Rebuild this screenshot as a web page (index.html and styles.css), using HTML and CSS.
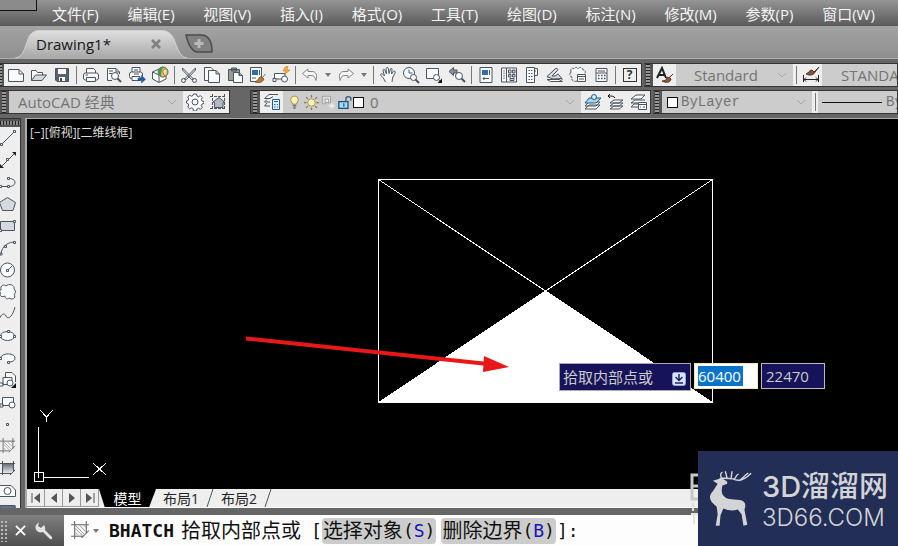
FILE: index.html
```html
<!DOCTYPE html>
<html lang="zh-CN">
<head>
<meta charset="utf-8">
<title>Drawing1</title>
<link rel="stylesheet" href="styles.css">
</head>
<body>
<svg class="defs" aria-hidden="true">
  <defs>
    <linearGradient id="tabfill" x1="0" y1="0" x2="0" y2="1"><stop offset="0" stop-color="#e0e0e0"/><stop offset="1" stop-color="#a8a8a8"/></linearGradient>
    <linearGradient id="shade" x1="0" y1="0" x2="0" y2="1"><stop offset="0" stop-color="#60656d"/><stop offset="1" stop-color="#f4f5f7"/></linearGradient>
    <symbol id="new" viewBox="0 0 18 18"><path class="w" d="M1.500 3.500H12L16.500 8V15.500H1.500Z"/><path d="M12 3.500V8H16.500"/></symbol>
    <symbol id="open" viewBox="0 0 18 18"><path class="w" d="M1.500 14.500V4.500H6L7.500 6.500H12.500V9"/><path class="g" d="M1.500 14.500L5.500 9H16.500L12 14.500Z"/></symbol>
    <symbol id="save" viewBox="0 0 18 18"><path class="d" d="M2.500 2.500H15.500V15.500H4L2.500 14Z"/><path fill="#fff" stroke="none" d="M5 3H13V8H5ZM6 11H12V15H6Z"/><path fill="#3f4855" stroke="none" d="M7 12h2v3H7z"/></symbol>
    <symbol id="print" viewBox="0 0 18 18"><path class="w" d="M4.500 7V2.500H11.500L13.500 4.500V7"/><rect class="w" x="1.500" y="7" width="15" height="7" rx="2"/><path class="w" d="M4.500 11.500H13.500V15.500H4.500ZM3.500 9H6"/></symbol>
    <symbol id="preview" viewBox="0 0 18 18"><path class="w" d="M2.500 14.500V2.500H11L14.500 6V8M2.500 14.500H7"/><path d="M4 5h4M4 7.500h3M11 2.500V6h3.500"/><circle class="w" cx="10" cy="10" r="3.500"/><path stroke-width="2" d="M12.500 12.500L16 16"/></symbol>
    <symbol id="publish" viewBox="0 0 18 18"><path class="w" d="M4 6V1.500H12V6"/><rect class="w" x="1.500" y="6" width="13" height="6.500" rx="2"/><path class="w" d="M4 10.500h8v4H4zM6 4h4M6 8h5"/><path fill="#1f5da5" stroke="#1f4d85" stroke-width=".5" d="M10 12h3.500V9.500l4 3.800-4 3.700v-2.500H10z"/></symbol>
    <symbol id="cube" viewBox="0 0 18 18"><path class="w" d="M1.500 6L8 3L15 6V13L8 16.500L1.500 13Z"/><path d="M1.500 6L8 9V16"/><circle cx="12" cy="6" r="5" fill="#f0c565" stroke="#5a6b3d"/><path fill="#3a9b57" stroke="none" d="M11 1c-5 2-5 7-1 10 1-3-1-6 3-10z"/><path fill="#dff0da" stroke="#c85729" d="M15 3c-5 0-3 5-1 7"/></symbol>
    <symbol id="cut" viewBox="0 0 18 18"><path d="M2.500 2L13.500 13L11.500 13.500L2.500 4ZM15.500 2L4.500 13L6.500 13.500L15.500 4Z"/><circle cx="3.500" cy="14.500" r="2"/><circle cx="14.500" cy="14.500" r="2"/></symbol>
    <symbol id="copy" viewBox="0 0 18 18"><path class="w" d="M1.500 1.500H8L10.500 4V14.500H1.500Z"/><path class="w" d="M5.500 4.500H13L16.500 8V16.500H5.500ZM13 4.500V8H16.500"/></symbol>
    <symbol id="paste" viewBox="0 0 18 18"><path fill="#9a9a94" d="M2.500 3.500H13.500V14.500H2.500ZM5.500 2h5v3h-5z"/><path class="w" d="M7.500 6.500H13L16.500 9.500V16.500H7.500ZM13 6.500V9.500H16.500"/></symbol>
    <symbol id="match" viewBox="0 0 18 18"><path class="w" d="M1.500 1.500H12.500V15.500H1.500Z"/><path fill="#2d6ca8" stroke="none" d="M3 4h6v5H3z"/><path d="M10.500 4v5M3 12h4"/><path fill="#b57a3d" stroke="#744620" stroke-width=".8" d="M16.500 8L13 12M12 10.500l3 2.500c-2 4-5 4-9 3c3-1 3-4 6-5.500z"/></symbol>
    <symbol id="block" viewBox="0 0 18 18"><path class="w" d="M2.500 7.500H13V13H2.500Z"/><path class="w" d="M1 12.500h3v3H1zM9.500 13a3 3 0 106 0a3 3 0 10-6 0"/><path fill="#f5ad32" stroke="#bd6c16" stroke-width=".5" d="M13 1l3-1-1 4h3l-6 5 1.500-4H11z"/></symbol>
    <symbol id="undo" viewBox="0 0 18 18"><path fill="#f7f7f7" stroke="#858585" d="M1.500 7.500L7 3V5.500H11C15 5.500 16.500 9 15 14.500C14 11 13 9.500 10 9.500H7V12Z"/></symbol>
    <symbol id="redo" viewBox="0 0 18 18"><path fill="#f7f7f7" stroke="#858585" d="M16.500 7.500L11 3V5.500H7C3 5.500 1.500 9 3 14.500C4 11 5 9.500 8 9.500H11V12Z"/></symbol>
    <symbol id="down" viewBox="0 0 8 8"><path fill="#777" stroke="none" d="M1 2h6L4 6z"/></symbol>
    <symbol id="pan" viewBox="0 0 18 18"><path class="w" d="M6.500 16C5 12 2 10 1.500 8.500C2 7 4 8 5.500 10L4 4.500C4 3 5.500 3 6 4.500L7.500 8L7 2.500C7.500 1 9 1 9.500 3L10 7.500L11.500 3C12 2 13.500 2.500 13 4L12.500 8L14.500 5.500C15.500 4.500 17 5.500 16 7L13.500 12L13 16"/></symbol>
    <symbol id="zoomrt" viewBox="0 0 18 18"><circle class="w" cx="7" cy="7" r="5.500"/><path stroke="#27659a" d="M7 3.500V7h3.500"/><circle class="w" cx="11.500" cy="11.500" r="3"/><path stroke-width="2" d="M13.500 13.500L17 17"/></symbol>
    <symbol id="zoomwin" viewBox="0 0 18 18"><path class="w" d="M1.500 2.500h12v10h-12z"/><circle class="w" cx="11.500" cy="11.500" r="3"/><path d="M13.500 13.500L15 15"/><path fill="#111" stroke="none" d="M17 12.500V17H12.500z"/></symbol>
    <symbol id="zoomprev" viewBox="0 0 18 18"><path fill="#8a8f95" d="M1 5.500L5.500 1.500V4H9V7H5.500V9.500Z"/><circle class="w" cx="11" cy="10" r="3.500"/><path stroke-width="2" d="M13.500 12.500L17 16"/></symbol>
    <symbol id="props" viewBox="0 0 18 18"><path class="w" d="M3 1.500H15V16.500H3Z"/><path fill="#2d6fa9" stroke="none" d="M5 4h6v5H5z"/><path d="M12.500 4v5M6 12.500h6M7.500 11L6 12.500L7.500 14"/></symbol>
    <symbol id="center" viewBox="0 0 18 18"><path class="w" d="M1.500 2H16.500V16H1.500ZM6.500 2V16"/><path stroke-dasharray="1.500 1" d="M4 4v10"/><path class="g" d="M8.500 4h2.500v3H8.500zM12.500 4h2.500v3h-2.500zM8.500 8.500h2.500v2.500H8.500zM12.500 8.500h2.500v2.500h-2.500zM10 12.500h4v2h-4z"/></symbol>
    <symbol id="palette" viewBox="0 0 18 18"><path class="w" d="M3.500 1.500h8v15h-8zM11.500 2.500h3v7h-3z"/><path stroke-dasharray="1.500 1" d="M5.500 4.500h4M5.500 7.500h4M5.500 10.500h4M5.500 13.500h4M11.500 5h3"/></symbol>
    <symbol id="sheets" viewBox="0 0 18 18"><path class="w" d="M1 13.500H13L16.500 15.500H4.500ZM1 11H12L16.500 13.500"/><path class="g" d="M1 10.500L9 3C11 1.500 13 3 11 5L6 10H9L12 8L16 12.500L7 13Z"/></symbol>
    <symbol id="cloud" viewBox="0 0 18 18"><path class="w" stroke-dasharray="3 1" d="M2 6C1 3 3 1 5 3C6 1 8 1 9 3C11 0 14 2 14 4C17 4 17 7 15 8"/><path stroke-dasharray="3 1" d="M2 6C0 8 1 11 3 11C2 15 5 16 8 15"/><path class="w" d="M8.500 8.500h8v7h-8zM8.500 10.500h8M10 13h5"/></symbol>
    <symbol id="calc" viewBox="0 0 18 18"><path class="w" d="M4 2.500h11v13H4zM6 5h7M4 7h11"/><path stroke-width="1.500" stroke-dasharray="1.500 1.500" d="M6 9.500h8M6 12.500h8"/></symbol>
    <symbol id="gear" viewBox="0 0 18 18"><path class="w" d="M7.500 1h3l.5 2 1.500.7 2-1 1.800 1.800-1 2 .7 1.500 2 .5v2l-2 .5-.7 1.500 1 2-1.800 1.800-2-1-1.500.7-.5 2h-3L7 15.500l-1.500-.7-2 1L1.700 14l1-2-.7-1.500-1.500-.5V8L2 7.500 2.700 6l-1-2L3.500 2.200l2 1L7 2.500z"/><circle cx="9" cy="9" r="3"/></symbol>
    <symbol id="house" viewBox="0 0 18 18"><path stroke-dasharray="3 1" d="M1 3.500h16M1 15.500h16M3.500 1v16M15.500 1v16"/><path fill="#b4bac3" d="M4 9L10 4.500L15.500 9L14 9.500V14.500H5.500V9.500Z"/></symbol>
    <symbol id="layerprops" viewBox="0 0 18 18"><path class="w" d="M1.500 5.500L6 1.500H15M1.500 5.500H7L10 3.500M1.500 9L4 6.500M1.500 9H7M1.500 13L4 10M1.500 13H7"/><path fill="#e0f1fb" stroke="#225d8e" d="M9.500 6.500h7v10h-7zM11 8.500h4M11 11.500h1.500M14 11.500h1M11 14h1.500M14 14h1"/></symbol>
    <symbol id="bulb" viewBox="0 0 18 18"><path fill="#fff0a8" stroke="#927f43" d="M6.500 11C6.500 8.500 4.500 8 4.500 5.500C4.500 0 13.500 0 13.500 5.500C13.500 8 11.500 8.500 11.500 11Z"/><path fill="#777" d="M7 12.500h4M7 14.500h4M8 16h2"/></symbol>
    <symbol id="sun" viewBox="0 0 18 18"><path stroke="#837851" stroke-width="1.500" d="M9 0v3M9 15v3M0 9h3M15 9h3M2.500 2.500l2 2M13.500 13.500l2 2M15.500 2.500l-2 2M2.500 15.500l2-2"/><circle cx="9" cy="9" r="4.500" fill="#fff2b0" stroke="#998657"/></symbol>
    <symbol id="vpfreeze" viewBox="0 0 18 18"><path stroke="#999" fill="#ddd" d="M1.500 1.500h10v8h-3M1.500 1.500v9h5"/><path fill="#eee" stroke="#999" d="M5 5h4v4H5z"/><path stroke="#f3f3f3" d="M13 9v8M9 13h8M10.500 10.500l5 5M15.500 10.500l-5 5"/></symbol>
    <symbol id="lock" viewBox="0 0 18 18"><path fill="#a7ddf5" stroke="#164f7c" stroke-width="1.500" d="M1 8h11v8H1z"/><path stroke="#275b80" stroke-width="1.500" d="M9.500 8V4.500C9.500 1 15.500 1 15.500 4.500V7M7 10v4"/></symbol>
    <symbol id="layers" viewBox="0 0 18 18"><path class="w" d="M1 16L5 12H16L12 16ZM1 13L5 9H16L12 13Z"/><path fill="#a9d2e9" stroke="#245d84" d="M1 10L5 5H17L12 10Z"/><circle cx="10" cy="4" r="2.500" fill="#d5edf7" stroke="#245d84"/></symbol>
    <symbol id="layerprev" viewBox="0 0 18 18"><path class="w" d="M3 16L7 13H16L12 16ZM3 13L7 10H16L12 13ZM3 10L7 7H16L12 10Z"/><path stroke="#111" d="M8 5C7 3 5 3 1 3M3 1L1 3L3 5"/></symbol>
    <symbol id="layerstate" viewBox="0 0 18 18"><path class="w" d="M1 14L4 11H8M1 10L5 7H15M1 6L6 2H15L11 6ZM1 10H8M1 14H8"/><path class="w" d="M8.500 9.500h8v7h-8zM8.500 11.500h8M10 14h1M13 14h2"/></symbol>
    <symbol id="brushA" viewBox="0 0 18 18"><path stroke="#222" stroke-width="2" d="M1 12L6 2L10 12M3 9H9"/><path fill="#935833" stroke="#53301b" d="M17 8L13 12L11 11C11 14 9 15 6 15C10 17 14 17 15 13L13 11"/></symbol>
    <symbol id="brushDim" viewBox="0 0 18 18"><path stroke="#222" d="M1.500 9v7M16.500 9v7M2 13.500h14M4 11.500L2 13.500l2 2M14 11.500l2 2-2 2"/><path fill="#805536" stroke="#513320" d="M17 1L12 6L10 4C7 4 7 7 4 8C8 10 12 9 13 6Z"/></symbol>
    <symbol id="chev" viewBox="0 0 10 10"><path stroke="#a6a6a6" d="M1 3L5 7L9 3"/></symbol>
    <symbol id="hatch" viewBox="0 0 18 18"><path fill="#f7f7f7" stroke="none" d="M3 3h12v8l-4 4H3z"/><path stroke="#686868" d="M3.500 0v17M0 3.500h17M14.500 0v12M0 14.500h11M10 16l7-7"/><path stroke="#888" stroke-width=".8" d="M4 11l3 3M4 7l7 7M4 4l9 9M8 4l6 6M12 4l2 2"/></symbol>
    <symbol id="l-line" viewBox="0 0 16 16"><path d="M1 15L15 1"/><path class="w" d="M.5 13.500h2v2h-2zM13.500.5h2v2h-2z"/></symbol>
    <symbol id="l-ray" viewBox="0 0 16 16"><path d="M1 15L15 1"/><path fill="#222" stroke="none" d="M0 12l4 4H0zM12 0h4v4z"/><path class="w" d="M6.500 6.500h2v2h-2z"/></symbol>
    <symbol id="l-poly" viewBox="0 0 16 16"><path d="M0 12.500H9C17 12.500 17 4.500 9 4.500"/><path class="w" d="M-.5 11.500h2v2h-2zM7.500 11.500h2v2h-2zM7.500 3.500h2v2h-2z"/></symbol>
    <symbol id="l-pent" viewBox="0 0 16 16"><path class="g" d="M7.500 1.500L15.500 6.500L13 14.500H2.500L-.5 6.500Z"/></symbol>
    <symbol id="l-rect" viewBox="0 0 16 16"><path class="g" d="M.5 3.500h14v9H.5z"/><path class="w" d="M13.500 2.500h2v2h-2zM-.5 11.500h2v2h-2z"/></symbol>
    <symbol id="l-arc" viewBox="0 0 16 16"><path d="M1 14C2 5 9 2 15 2"/><path class="w" d="M0 13h2v2H0zM4.500 5.500h2v2h-2zM13.500 1.500h2v2h-2z"/></symbol>
    <symbol id="l-circle" viewBox="0 0 16 16"><circle class="w" cx="7.500" cy="8" r="7"/><path class="w" d="M8 8l4-4M6.500 7.500h2v2h-2z"/></symbol>
    <symbol id="l-cloud" viewBox="0 0 16 16"><path class="w" d="M1 6C0 1 4 0 6 2C9-1 15 1 14 5C17 8 15 10 14 10C17 15 11 16 9 14C7 16 5 14 5 12C1 14-1 11 1 9C-1 8-1 7 1 6Z"/></symbol>
    <symbol id="l-spline" viewBox="0 0 16 16"><path d="M-1 14C1 7 5 7 6 10S12 13 15 1"/></symbol>
    <symbol id="l-ellipse" viewBox="0 0 16 16"><ellipse class="w" cx="7.500" cy="8" rx="7" ry="4.500"/><path class="w" d="M7.500 2.500h2v2h-2zM-.5 7.500h2v2h-2zM13.500 7.500h2v2h-2z"/></symbol>
    <symbol id="l-earc" viewBox="0 0 16 16"><path class="w" d="M0 8C3 2 15 3 15 8C15 11 12 12 8 12"/><path class="w" d="M-.5 7.500h2v2h-2zM7.500 11.500h2v2h-2z"/></symbol>
    <symbol id="l-insert" viewBox="0 0 16 16"><path class="w" d="M5.500 6V.5H12L15.500 4V10M3 5.500h9v7H3zM-1 11h4v3h-4z"/><circle class="w" cx="10" cy="11" r="3"/><path fill="#111" stroke="none" d="M16 11v5h-5z"/></symbol>
    <symbol id="l-make" viewBox="0 0 16 16"><path class="w" d="M2.500 3.500h11v8H2.500zM0 10h3v3H0z"/><circle class="w" cx="12" cy="11" r="3"/></symbol>
    <symbol id="l-point" viewBox="0 0 16 16"><path class="w" d="M6.500 7.500h2v2h-2z"/></symbol>
    <symbol id="l-grad" viewBox="0 0 16 16"><path fill="url(#shade)" stroke="none" d="M2 3h12v8l-4 3H2z"/><path d="M2.500 1v14M0 3.500h15M13.500 1v11M0 13.500h11M10 15l5-5"/></symbol>
    <symbol id="l-region" viewBox="0 0 16 16"><path class="w" d="M-1 3.500H11L15.500 8V14.500H-1"/><circle class="w" cx="7.500" cy="9" r="3.500"/></symbol>
    <symbol id="l-table" viewBox="0 0 16 16"><path class="w" d="M0 1.500h15v13H0zM0 5h15M0 9h15M5 3v12M10 3v12"/><path fill="#63718e" d="M0 1.500h15v3H0z"/></symbol>
  </defs>
</svg>
<div class="app">
  <header>
    <nav class="menu" aria-label="主菜单">
      <span class="corner"></span>
      <button>文件(F)</button><button>编辑(E)</button><button>视图(V)</button><button>插入(I)</button><button>格式(O)</button><button>工具(T)</button><button>绘图(D)</button><button>标注(N)</button><button>修改(M)</button><button>参数(P)</button><button>窗口(W)</button>
    </nav>
    <div class="files">
      <div class="file">
        <svg class="file-shape" viewBox="0 0 172 28"><path fill="url(#tabfill)" stroke="#d0d0d0" d="M0 28C8 27 9 20 13 9Q16 .5 24 .5H147Q155 .5 159 9C163 20 165 27 172 28"/></svg>
        <span class="file-name">Drawing1*</span>
        <button class="close" aria-label="关闭图形"><svg viewBox="0 0 10 10"><path stroke="#808080" stroke-width="2.500" d="M1 1L9 9M9 1L1 9"/></svg></button>
      </div>
      <button class="add" aria-label="新图形"><svg viewBox="0 0 28 20"><path fill="#818181" stroke="#4b4b4b" stroke-width="1.500" d="M1 1H17Q27 2 27 18H13Q5 18 1 1Z"/><path stroke="#b8b8b8" stroke-width="3" d="M14 5v9M9.500 9.500h9"/></svg></button>
    </div>
  </header>

  <div class="bars">
    <div class="row">
      <div class="bar">
        <span class="grip narrow"></span>
        <button aria-label="新建"><svg><use href="#new"/></svg></button><button aria-label="打开"><svg><use href="#open"/></svg></button><button aria-label="保存"><svg><use href="#save"/></svg></button><i class="sep"></i>
        <button aria-label="打印"><svg><use href="#print"/></svg></button><button aria-label="打印预览"><svg><use href="#preview"/></svg></button><button aria-label="发布"><svg><use href="#publish"/></svg></button><button aria-label="三维打印"><svg><use href="#cube"/></svg></button><i class="sep"></i>
        <button aria-label="剪切"><svg><use href="#cut"/></svg></button><button aria-label="复制"><svg><use href="#copy"/></svg></button><button aria-label="粘贴"><svg><use href="#paste"/></svg></button><button aria-label="特性匹配"><svg><use href="#match"/></svg></button><button aria-label="块编辑器"><svg><use href="#block"/></svg></button><i class="sep"></i>
        <button aria-label="放弃"><svg><use href="#undo"/></svg></button><button class="drop" aria-label="放弃列表"><svg><use href="#down"/></svg></button><button aria-label="重做"><svg><use href="#redo"/></svg></button><button class="drop" aria-label="重做列表"><svg><use href="#down"/></svg></button><i class="sep"></i>
        <button aria-label="平移"><svg><use href="#pan"/></svg></button><button aria-label="实时缩放"><svg><use href="#zoomrt"/></svg></button><button aria-label="窗口缩放"><svg><use href="#zoomwin"/></svg></button><button aria-label="缩放上一个"><svg><use href="#zoomprev"/></svg></button><i class="sep"></i>
        <button aria-label="特性"><svg><use href="#props"/></svg></button><button aria-label="设计中心"><svg><use href="#center"/></svg></button><button aria-label="工具选项板"><svg><use href="#palette"/></svg></button><button aria-label="图纸集"><svg><use href="#sheets"/></svg></button><button aria-label="标记集"><svg><use href="#cloud"/></svg></button><button aria-label="计算器"><svg><use href="#calc"/></svg></button><i class="sep"></i>
        <button class="help" aria-label="帮助"><span>?</span></button>
      </div>
      <div class="bar grow">
        <span class="grip"></span>
        <button aria-label="文字样式"><svg><use href="#brushA"/></svg></button>
        <div class="combo style"><select aria-label="文字样式列表"><option>Standard</option></select><svg class="chev"><use href="#chev"/></svg></div><i class="sep"></i>
        <button aria-label="标注样式"><svg><use href="#brushDim"/></svg></button>
        <div class="combo dim"><select aria-label="标注样式列表"><option>STANDARD</option></select></div>
      </div>
    </div>
    <div class="row second">
      <div class="bar workspace">
        <span class="grip"></span>
        <div class="combo wide"><select aria-label="工作空间"><option>AutoCAD 经典</option></select><svg class="chev"><use href="#chev"/></svg></div>
        <button aria-label="工作空间设置"><svg><use href="#gear"/></svg></button><button aria-label="我的工作空间"><svg><use href="#house"/></svg></button>
      </div>
      <div class="bar layer">
        <span class="grip"></span>
        <button aria-label="图层特性"><svg><use href="#layerprops"/></svg></button>
        <div class="combo layers"><svg><use href="#bulb"/></svg><svg><use href="#sun"/></svg><svg><use href="#vpfreeze"/></svg><svg><use href="#lock"/></svg><i class="swatch"></i><select aria-label="图层"><option>0</option></select><svg class="chev"><use href="#chev"/></svg></div>
        <button aria-label="置为当前"><svg><use href="#layers"/></svg></button><button aria-label="上一个图层"><svg><use href="#layerprev"/></svg></button><button aria-label="图层状态"><svg><use href="#layerstate"/></svg></button>
      </div>
      <div class="bar grow">
        <span class="grip"></span>
        <div class="combo color"><i class="swatch"></i><select aria-label="颜色"><option>ByLayer</option></select><svg class="chev"><use href="#chev"/></svg></div><i class="sep"></i>
        <div class="combo linetype"><i class="line"></i><select aria-label="线型"><option>ByLayer</option></select></div>
      </div>
    </div>
  </div>

  <main>
    <aside class="tools" aria-label="绘图">
      <span class="grip-top"></span>
      <button aria-label="直线"><svg><use href="#l-line"/></svg></button><button aria-label="构造线"><svg><use href="#l-ray"/></svg></button><button aria-label="多段线"><svg><use href="#l-poly"/></svg></button><button aria-label="多边形"><svg><use href="#l-pent"/></svg></button><button aria-label="矩形"><svg><use href="#l-rect"/></svg></button><button aria-label="圆弧"><svg><use href="#l-arc"/></svg></button><button aria-label="圆"><svg><use href="#l-circle"/></svg></button><button aria-label="修订云线"><svg><use href="#l-cloud"/></svg></button><button aria-label="样条曲线"><svg><use href="#l-spline"/></svg></button><button aria-label="椭圆"><svg><use href="#l-ellipse"/></svg></button><button aria-label="椭圆弧"><svg><use href="#l-earc"/></svg></button><button aria-label="插入块"><svg><use href="#l-insert"/></svg></button><button aria-label="创建块"><svg><use href="#l-make"/></svg></button><button aria-label="点"><svg><use href="#l-point"/></svg></button><button aria-label="图案填充"><svg><use href="#hatch"/></svg></button><button aria-label="渐变色"><svg><use href="#l-grad"/></svg></button><button aria-label="面域"><svg><use href="#l-region"/></svg></button><button aria-label="表格"><svg><use href="#l-table"/></svg></button>
    </aside>
    <section class="view">
      <div class="canvas">
        <svg class="drawing" shape-rendering="crispEdges">
          <path fill="#fff" stroke="none" d="M351.500 283.500L518.500 172L685.500 283.500Z"/>
          <path stroke="#fff" d="M351.500 60.500H685.500V283.500H351.500ZM351.500 60.500L685.500 283.500M685.500 60.500L351.500 283.500"/>
          <path stroke="#fff" d="M11.500 308V358.500M16 358.500H62M7.500 353.500H16.500V362.500H7.500ZM66 344L79 356M79 344L66 356M13 291L19.500 298L26 291M19.500 298V303"/>
          <g shape-rendering="geometricPrecision"><path stroke="#e81818" stroke-width="4" d="M219 219.500L461 245"/><path fill="#e81818" stroke="none" d="M457 237L482 248L456 253Z"/></g>
        </svg>
        <div class="viewlabel">[−][俯视][二维线框]</div>
        <div class="dynamic">
          <div class="ask">拾取内部点或<svg viewBox="0 0 14 14"><rect x=".5" y=".5" width="13" height="13" rx="2" fill="#dce6fa" stroke="#8ea4da"/><path stroke="#192866" stroke-width="1.500" d="M7 2v6M3.500 5L7 8.500L10.500 5M3 11h8"/></svg></div>
          <input class="picked" aria-label="X 坐标" value="60400"><input aria-label="Y 坐标" value="22470">
        </div>
      </div>
      <div class="layouts">
        <button class="step" aria-label="第一个"><svg viewBox="0 0 12 12"><path d="M2 1v10" stroke="#555"/><path fill="#555" stroke="none" d="M10 1v10L4 6z"/></svg></button><button class="step" aria-label="上一个"><svg viewBox="0 0 12 12"><path fill="#555" stroke="none" d="M9 1v10L3 6z"/></svg></button><button class="step" aria-label="下一个"><svg viewBox="0 0 12 12"><path fill="#555" stroke="none" d="M3 1v10L9 6z"/></svg></button><button class="step" aria-label="最后一个"><svg viewBox="0 0 12 12"><path d="M10 1v10" stroke="#555"/><path fill="#555" stroke="none" d="M2 1v10L8 6z"/></svg></button>
        <button class="model">模型</button><button class="layout">布局1</button><svg class="slash" viewBox="0 0 8 18"><path stroke="#555" d="M7 0L1 18"/></svg><button class="layout">布局2</button><svg class="slash" viewBox="0 0 8 18"><path stroke="#555" d="M7 0L1 18"/></svg>
      </div>
    </section>
  </main>

  <footer>
    <div class="cmdtools"><span class="dots"></span>
      <button aria-label="关闭命令行"><svg viewBox="0 0 12 12"><path stroke="#fff" stroke-width="2" d="M1 1L11 11M11 1L1 11"/></svg></button>
      <button aria-label="自定义"><svg class="wrench" viewBox="0 0 20 20"><path fill="#e4e4e4" stroke="none" d="M5 1L4 5L7 7L10 4C12 7 11 9 11 9L18 16Q19 19 16 18L9 11C4 13 0 8 2 4Z"/></svg></button>
    </div>
    <div class="command">
      <svg class="cmdicon"><use href="#hatch"/></svg><svg class="cmddown"><use href="#down"/></svg>
      <b>BHATCH</b><span class="prompt">拾取内部点或</span><span class="bracket">[</span><button>选择对象<span>(<em>S</em>)</span></button><button>删除边界<span>(<em>B</em>)</span></button><span class="end">]:</span>
    </div>
  </footer>
  <div class="brand">
    <svg class="ghost" viewBox="0 0 8 52"><path stroke="#c8c8c8" stroke-width="3" d="M8 2H2V26H8M2 13H8"/><path stroke="#e2e2e2" stroke-width="2" d="M3 30V38M1 41H8M4 41V51"/></svg>
    <svg class="deer" viewBox="0 0 46 60"><path fill="#d2d4d6" stroke="none" d="M3 11L9 9L12 7L14 9L18 12L18 14L13 16C11 24 13 28 20 30L31 31C37 32 38 36 36 41L39 57L35 58L33 46L29 41C24 43 19 42 14 40L11 47L10 58L6 58L8 46L7 38C-1 32 -2 27 3 22L8 14Z"/><path stroke="#d2d4d6" stroke-width="1.500" d="M13 9C10 6 11 3 13 2M13 8C17 9 21 8 24 9C31 13 38 8 43 3M18 9L16 1M22 9L23 1M25 9C28 8 27 4 30 4M30 11C35 8 36 5 40 3"/></svg>
    <div class="brandtext"><strong>3D溜溜网</strong><span>3D66.COM</span></div>
  </div>
</div>
</body>
</html>
```
FILE: styles.css
```css
* { box-sizing: border-box; }
body { margin: 0; overflow: hidden; background: #666; font-family: "Open Sans", "Noto Sans CJK SC", sans-serif; }
button { border: 0; padding: 0; background: none; font: inherit; color: inherit; display: flex; align-items: center; justify-content: center; flex: none; }
svg { display: block; flex: none; fill: none; stroke: #4b5461; }
.defs { position: absolute; width: 0; height: 0; }
.w { fill: #fafbfc; }
.g { fill: #d4d8df; }
.d { fill: #59626e; }
.app { position: relative; height: 100vh; display: flex; flex-direction: column; overflow: hidden; }

.menu { position: relative; display: flex; justify-content: space-between; height: 26px; padding: 0 23px 0 52px; background: linear-gradient(#959595, #5a5a5a); color: #f4f4f4; font-size: 15px; white-space: nowrap; }
.corner { position: absolute; left: 0; top: 0; width: 37px; height: 11px; border: solid #111; border-width: 0 1px 1px 0; background: #8b8b8b; }
.files { display: flex; height: 33px; padding: 4px 0 0 15px; background: linear-gradient(#a3a3a3, #8e8e8e); border-bottom: 1px solid #b0b0b0; }
.file { position: relative; display: flex; align-items: center; width: 170px; height: 28px; padding: 0 24px 0 21px; justify-content: space-between; color: #171717; font-size: 15px; }
.file-shape { position: absolute; left: 0; top: 0; width: 172px; height: 28px; }
.file-name, .close { position: relative; }
.close svg { width: 10px; height: 10px; }
.add { height: 20px; margin-top: 4px; }
.add svg { width: 28px; height: 20px; }

.bars { padding: 4px 0 1px; background: #666; }
.row { display: flex; height: 24px; gap: 2px; margin-bottom: 3px; }
.bar { display: flex; flex: none; border: solid #333; border-width: 1px 1px 1px 0; background: #eee; }
.bar.grow { flex: 1; min-width: 0; overflow: hidden; }
.bar button { width: 23px; }
.bar svg { width: 18px; height: 18px; }
.bar .drop { width: 13px; }
.bar .drop svg { width: 8px; height: 8px; }
.sep { flex: none; width: 4px; border-right: 1px solid #777; margin: 2px 2px 2px 0; }
.grip { flex: none; width: 9px; border: solid #555; border-width: 0 3px 0 2px; background: repeating-linear-gradient(#222 0 1px, #999 1px 3px); }
.grip.narrow { width: 4px; border-width: 0 2px 0 0; }
.help span { width: 14px; height: 14px; border: 1px solid #333; font-size: 12px; line-height: 12px; font-weight: 700; color: #333; }
.combo { display: flex; align-items: center; flex: none; background: #ccc; color: #747474; font-size: 15px; }
.combo select { appearance: none; flex: 1; min-width: 0; height: 22px; padding: 0; border: 0; background: none; color: inherit; font: inherit; }
.combo .chev { width: 10px; height: 10px; margin-right: 6px; }
.style { width: 117px; padding-left: 18px; font-size: 15px; }
.dim { flex: 1 0 120px; padding-left: 19px; font-size: 15px; }
.workspace { width: 230px; margin-right: 18px; }
.wide { flex: 1; padding-left: 9px; }
.layer { width: 401px; border-left-width: 1px; }
.layers { flex: 1; gap: 2px; padding-left: 4px; }
.layers svg { width: 15px; height: 15px; }
.swatch { width: 11px; height: 11px; border: 1px solid #111; background: #fff; flex: none; }
.layers .swatch { margin-left: -2px; }
.layers select { margin-left: 4px; }
.color { width: 150px; padding-left: 5px; gap: 3px; font-family: "Liberation Mono", monospace; font-size: 14px; }
.linetype { flex: 1 0 150px; padding-left: 4px; gap: 4px; font-family: "Liberation Mono", monospace; font-size: 14px; }
.line { width: 60px; height: 1px; background: #111; flex: none; }

main { display: flex; flex: 1; min-height: 0; }
.tools { display: flex; flex-direction: column; width: 21px; overflow: hidden; border: solid #333; border-width: 1px 1px 0 0; background: #eee; }
.grip-top { flex: none; height: 8px; border: solid #555; border-width: 2px 0; background: repeating-linear-gradient(90deg, #222 0 1px, #888 1px 3px); }
.tools button { height: 22px; width: 16px; }
.tools svg { width: 16px; height: 16px; overflow: visible; }
.view { display: flex; flex-direction: column; flex: 1; min-width: 0; margin-left: 4px; border: solid #aaa; border-width: 1px 0 0 2px; }
.canvas { position: relative; flex: 1; min-height: 0; overflow: hidden; background: #000; }
.drawing { width: 100%; height: 100%; }
.viewlabel { position: absolute; left: 3px; top: 5px; color: #ddd; font-size: 12px; line-height: 18px; }
.dynamic { position: absolute; left: 532px; top: 244px; display: flex; align-items: flex-start; gap: 3px; font-size: 15px; color: #ccc; }
.ask { display: flex; align-items: center; justify-content: space-between; width: 132px; height: 28px; padding: 0 4px 2px 3px; border: 1px solid #aaa; background: #17135a; }
.ask svg { width: 14px; height: 14px; margin-top: 6px; }
.dynamic input { width: 64px; height: 26px; padding: 2px 4px; border: 1px solid #bbb; border-radius: 0; background: #17135a; color: #ccc; font: inherit; }
.dynamic .picked { padding-left: 3px; color: #fff; border-color: #eee8bd; background: linear-gradient(#0b74c9, #0b74c9) 3px 2px / 45px 20px no-repeat #fff; }
.layouts { display: flex; height: 19px; background: #eee; font-size: 14px; color: #222; border-bottom: 1px solid #fff; }
.step { width: 18px; border: solid #999; border-width: 0 1px 1px 0; }
.step svg { width: 12px; height: 12px; }
.model { width: 57px; background: #000; color: #fff; clip-path: polygon(0 0, 100% 0, 88% 100%, 10% 100%); }
.layout { width: 50px; }
.slash { width: 8px; height: 18px; }

footer { display: flex; height: 38px; padding-top: 7px; background: #666; }
.cmdtools { display: flex; align-items: center; gap: 12px; width: 64px; background: linear-gradient(#808080, #4e4e4e); }
.dots { width: 7px; height: 22px; background: radial-gradient(circle, #bbb 1px, transparent 1px) 0 0 / 4px 4px; }
.cmdtools button { margin-left: -4px; }
.cmdtools svg { width: 11px; height: 11px; }
.cmdtools .wrench { width: 20px; height: 20px; }
.command { display: flex; flex: 1; min-width: 0; align-items: center; padding-left: 7px; background: #fdfdfd; color: #111; font-family: "DejaVu Sans Mono", "Noto Sans CJK SC", monospace; font-size: 18px; line-height: 26px; white-space: nowrap; }
.cmdicon { width: 19px; height: 19px; }
.cmddown { width: 8px; height: 8px; margin: 0 9px 0 2px; }
.prompt { margin-left: 7px; font-size: 20px; }
.bracket { margin-left: 10px; }
.command button { height: 26px; padding: 0 1px; border-radius: 4px; margin-right: 5px; background: #ccc; font-size: 20px; }
.command button span { font-size: 18px; }
.command em { color: #1515b5; font-style: normal; }
.end { margin-left: -4px; }

.brand { position: absolute; right: 0; bottom: 0; display: flex; gap: 8px; width: 200px; height: 95px; padding: 18px 0 0 12px; background: #222e55; color: #d2d4d6; }
.ghost { position: absolute; right: 100%; top: 22px; width: 8px; height: 52px; }
.deer { width: 44px; height: 60px; }
.brandtext { display: flex; flex-direction: column; font-family: Inter, "Noto Sans CJK SC", sans-serif; white-space: nowrap; }
.brandtext strong { font-size: 29px; line-height: 36px; font-weight: 500; }
.brandtext span { font-size: 24px; line-height: 25px; font-weight: 300; }
```
